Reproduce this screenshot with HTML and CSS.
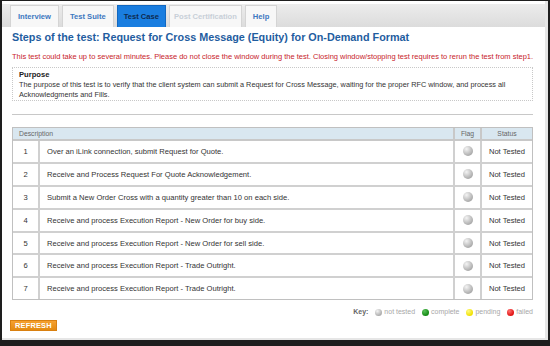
FILE: index.html
```html
<!DOCTYPE html>
<html lang="en">

<head>
    <meta charset="UTF-8">
    <title>Test Case</title>
    <link rel="stylesheet" href="styles.css">
</head>

<body>
    <div class="frame">
        <div class="tabs">
            <a class="tab">Interview</a>
            <a class="tab">Test Suite</a>
            <a class="tab active">Test Case</a>
            <a class="tab disabled">Post Certification</a>
            <a class="tab">Help</a>
        </div>

        <div class="content">
            <h1>Steps of the test: Request for Cross Message (Equity) for On-Demand Format</h1>

            <p class="warning">This test could take up to several minutes. Please do not close the window during the test. Closing window/stopping test requires to rerun the test from step1.</p>

            <div class="purpose">
                <h3>Purpose</h3>
                <p>The purpose of this test is to verify that the client system can submit a Request for Cross Message, waiting for the proper RFC window, and process all Acknowledgments and Fills.</p>
            </div>

            <hr>

            <table class="steps">
                <tr>
                    <th colspan="2" class="desc">Description</th>
                    <th class="flag">Flag</th>
                    <th class="status">Status</th>
                </tr>
                <tr>
                    <td class="num">1</td>
                    <td>Over an iLink connection, submit Request for Quote.</td>
                    <td class="flag"><span class="dot grey"></span></td>
                    <td class="status">Not Tested</td>
                </tr>
                <tr>
                    <td class="num">2</td>
                    <td>Receive and Process Request For Quote Acknowledgement.</td>
                    <td class="flag"><span class="dot grey"></span></td>
                    <td class="status">Not Tested</td>
                </tr>
                <tr>
                    <td class="num">3</td>
                    <td>Submit a New Order Cross with a quantity greater than 10 on each side.</td>
                    <td class="flag"><span class="dot grey"></span></td>
                    <td class="status">Not Tested</td>
                </tr>
                <tr>
                    <td class="num">4</td>
                    <td>Receive and process Execution Report - New Order for buy side.</td>
                    <td class="flag"><span class="dot grey"></span></td>
                    <td class="status">Not Tested</td>
                </tr>
                <tr>
                    <td class="num">5</td>
                    <td>Receive and process Execution Report - New Order for sell side.</td>
                    <td class="flag"><span class="dot grey"></span></td>
                    <td class="status">Not Tested</td>
                </tr>
                <tr>
                    <td class="num">6</td>
                    <td>Receive and process Execution Report - Trade Outright.</td>
                    <td class="flag"><span class="dot grey"></span></td>
                    <td class="status">Not Tested</td>
                </tr>
                <tr>
                    <td class="num">7</td>
                    <td>Receive and process Execution Report - Trade Outright.</td>
                    <td class="flag"><span class="dot grey"></span></td>
                    <td class="status">Not Tested</td>
                </tr>
            </table>

            <div class="key">
                <strong>Key:</strong>
                <span class="dot small grey"></span>not tested
                <span class="dot small green"></span>complete
                <span class="dot small yellow"></span>pending
                <span class="dot small red"></span>failed
            </div>

            <button class="refresh">REFRESH</button>
        </div>
    </div>
</body>

</html>
```

FILE: styles.css
```css
/* Test case page */
body {
    margin: 0;
    background-color: #1e1e1e;
    font-family: "Liberation Sans", Arial, sans-serif;
}

.frame {
    margin: 1px 2px 2px 2px;
    height: 339px;
    background-color: #fff;
    border-right: 3px solid #e6e6e6;
    border-bottom: 2px solid #e6e6e6;
    box-sizing: border-box;
    padding-top: 3px;
}

.tabs {
    display: flex;
    gap: 3px;
    height: 23px;
    padding: 1px 6px 0 8px;
    background: linear-gradient(#ececec, #dcdcdc);
    box-sizing: border-box;
}

.tab {
    padding: 0 7px;
    line-height: 21px;
    font-size: 7.6px;
    font-weight: bold;
    color: #3d78c0;
    background-color: #f7f7f7;
    border: 1px solid #d4d4d4;
    border-bottom: none;
}

.tab.active {
    padding: 0 6px;
    background-color: #1a7ee0;
    border-color: #1268c0;
    color: #0d2a50;
}

.tab.disabled {
    padding: 0 4px;
    color: #c8cfd8;
}

.content {
    padding: 0 12px 0 8px;
}

h1 {
    margin: 4px 0 0 2px;
    font-size: 10.8px;
    line-height: 13px;
    color: #1f5da0;
}

.warning {
    margin: 8px 0 0 2px;
    font-size: 7.5px;
    line-height: 9px;
    white-space: nowrap;
    color: #c8232c;
}

.purpose {
    margin: 6px 0 0 2px;
    border: 1px dotted #c8c8c8;
    padding: 2px 6px 0 6px;
    font-size: 7.3px;
    color: #333;
}

.purpose h3 {
    margin: 0 0 1px 0;
    font-size: 7.6px;
    line-height: 9px;
    color: #222;
}

.purpose p {
    margin: 0;
    line-height: 10px;
}

hr {
    margin: 13px 0 0 2px;
    border: none;
    border-top: 1px solid #c8c8c8;
}

.steps {
    margin: 12px 0 0 2px;
    width: 521px;
    border-collapse: separate;
    border-spacing: 0;
    border: 1px solid #c0c0c0;
    font-size: 7.6px;
    color: #333;
}

.steps th {
    height: 11px;
    background-color: #d9e7f0;
    color: #666;
    font-weight: normal;
    font-size: 6.8px;
    border-bottom: 2px solid #c8c8c8;
    padding: 0;
}

.steps th.desc {
    text-align: left;
    padding-left: 6px;
}

.steps th.flag,
.steps th.status {
    border-left: 2px solid #c8c8c8;
}

.steps td {
    height: 20.9px;
    padding: 0 0 0 7px;
    border-bottom: 2px solid #d0d0d0;
    border-left: 2px solid #d0d0d0;
}

.steps tr:last-child td {
    border-bottom: none;
}

.steps td.num {
    width: 25px;
    padding: 0;
    text-align: center;
    border-left: none;
}

.steps .flag {
    width: 25px;
    padding: 0;
    text-align: center;
}

.steps .status {
    width: 50px;
    padding: 0;
    text-align: center;
}

.dot {
    display: inline-block;
    width: 10px;
    height: 10px;
    border-radius: 50%;
    vertical-align: middle;
}

.dot.grey {
    background: radial-gradient(circle at 35% 30%, #f4f4f4, #a8a8a8 75%);
}

.dot.small {
    width: 7px;
    height: 7px;
    margin: 0 2px 0 5px;
}

.dot.green {
    background: radial-gradient(circle at 35% 30%, #5ac05a, #138a13 70%);
}

.dot.yellow {
    background: radial-gradient(circle at 35% 30%, #fffa80, #f0e000 70%);
}

.dot.red {
    background: radial-gradient(circle at 35% 30%, #ff7070, #e01010 70%);
}

.key {
    margin: 8px 0 0 0;
    text-align: right;
    font-size: 7px;
    line-height: 8px;
    color: #a8a8a8;
}

.key strong {
    color: #666;
}

.refresh {
    display: block;
    margin: 4px 0 0 0;
    height: 11px;
    padding: 0 4px;
    border: 1px solid #d98010;
    background: linear-gradient(#f5a030, #e48a10);
    color: #fff;
    font-family: "Liberation Sans", Arial, sans-serif;
    font-size: 7.4px;
    line-height: 9px;
    font-weight: bold;
    letter-spacing: 0.2px;
}
```
